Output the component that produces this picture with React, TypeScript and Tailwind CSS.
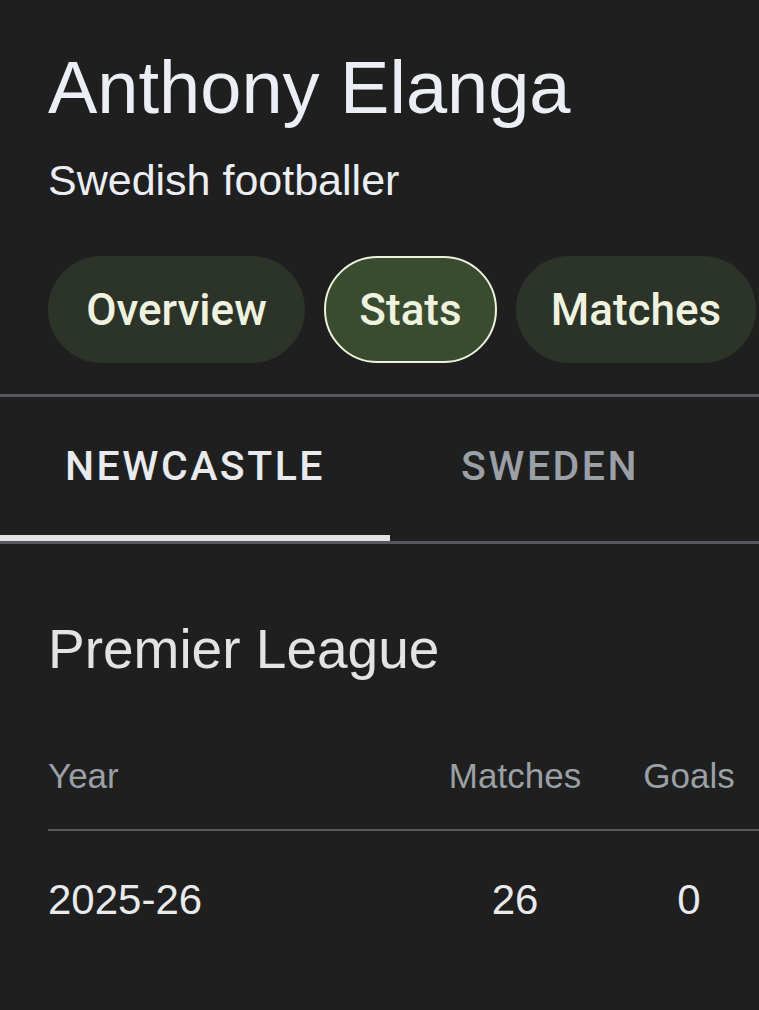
export default function App() {
  const tabs = [
    { label: "NEWCASTLE", active: true },
    { label: "SWEDEN", active: false },
  ];

  return (
    <div className="min-h-screen w-[759px] overflow-hidden bg-[#1f1f1f] font-['Liberation_Sans',Arial,sans-serif]">
      {/* HEADER */}
      <div className="px-12 pt-[51px]">
        <h1 className="text-[74px] leading-none text-[#eceef6] whitespace-nowrap">Anthony Elanga</h1>
        <p className="mt-[34px] text-[43px] leading-none text-[#eceef6] whitespace-nowrap">Swedish footballer</p>

        <div className="mt-[54px] flex gap-[19px] font-['Roboto',sans-serif] font-medium">
          <button className="h-[107px] w-[257px] shrink-0 rounded-full bg-[#2c3328] text-[44px] text-[#eef2df]">
            Overview
          </button>
          <button className="h-[107px] w-[173px] shrink-0 rounded-full border-2 border-[#eef2dc] bg-[#3a4c30] text-[44px] text-[#eef2df]">
            Stats
          </button>
          <button className="h-[107px] w-[240px] shrink-0 rounded-full bg-[#2c3328] text-[44px] text-[#eef2df]">
            Matches
          </button>
        </div>
      </div>

      <div className="mt-[31px] h-[3px] w-full bg-[#55585c]" />

      {/* TEAM TABS */}
      <div className="flex font-['Roboto',sans-serif] font-medium">
        {tabs.map((t) =>
          t.active ? (
            <div key={t.label} className="flex w-[390px] flex-col">
              <div className="flex h-[138px] items-center justify-center text-[41px] leading-none tracking-[2.5px] text-[#e8eaed]">
                {t.label}
              </div>
              <div className="h-[6px] w-full bg-[#e3e3e3]" />
            </div>
          ) : (
            <div key={t.label} className="flex h-[144px] items-start pl-[71px]">
              <div className="flex h-[138px] items-center text-[41px] leading-none tracking-[2.5px] text-[#9aa0a6]">
                {t.label}
              </div>
            </div>
          )
        )}
      </div>
      <div className="h-[3px] w-full bg-[#55585c]" />

      {/* STATS TABLE */}
      <h2 className="mt-[78px] px-12 text-[55px] leading-none text-[#e3e3e3] whitespace-nowrap">Premier League</h2>

      <div className="ml-12 mt-[81px] w-[731px]">
        <div className="grid grid-cols-[1fr_168px_180px] text-[35px] leading-none text-[#9aa0a6]">
          <span>Year</span>
          <span className="text-center">Matches</span>
          <span className="text-center">Goals</span>
        </div>
        <div className="mt-[36px] h-[2px] w-full bg-[#55585c]" />
        <div className="mt-[48px] grid grid-cols-[1fr_168px_180px] text-[42px] leading-none text-[#e8eaed]">
          <span>2025-26</span>
          <span className="text-center">26</span>
          <span className="text-center">0</span>
        </div>
      </div>
    </div>
  );
}
